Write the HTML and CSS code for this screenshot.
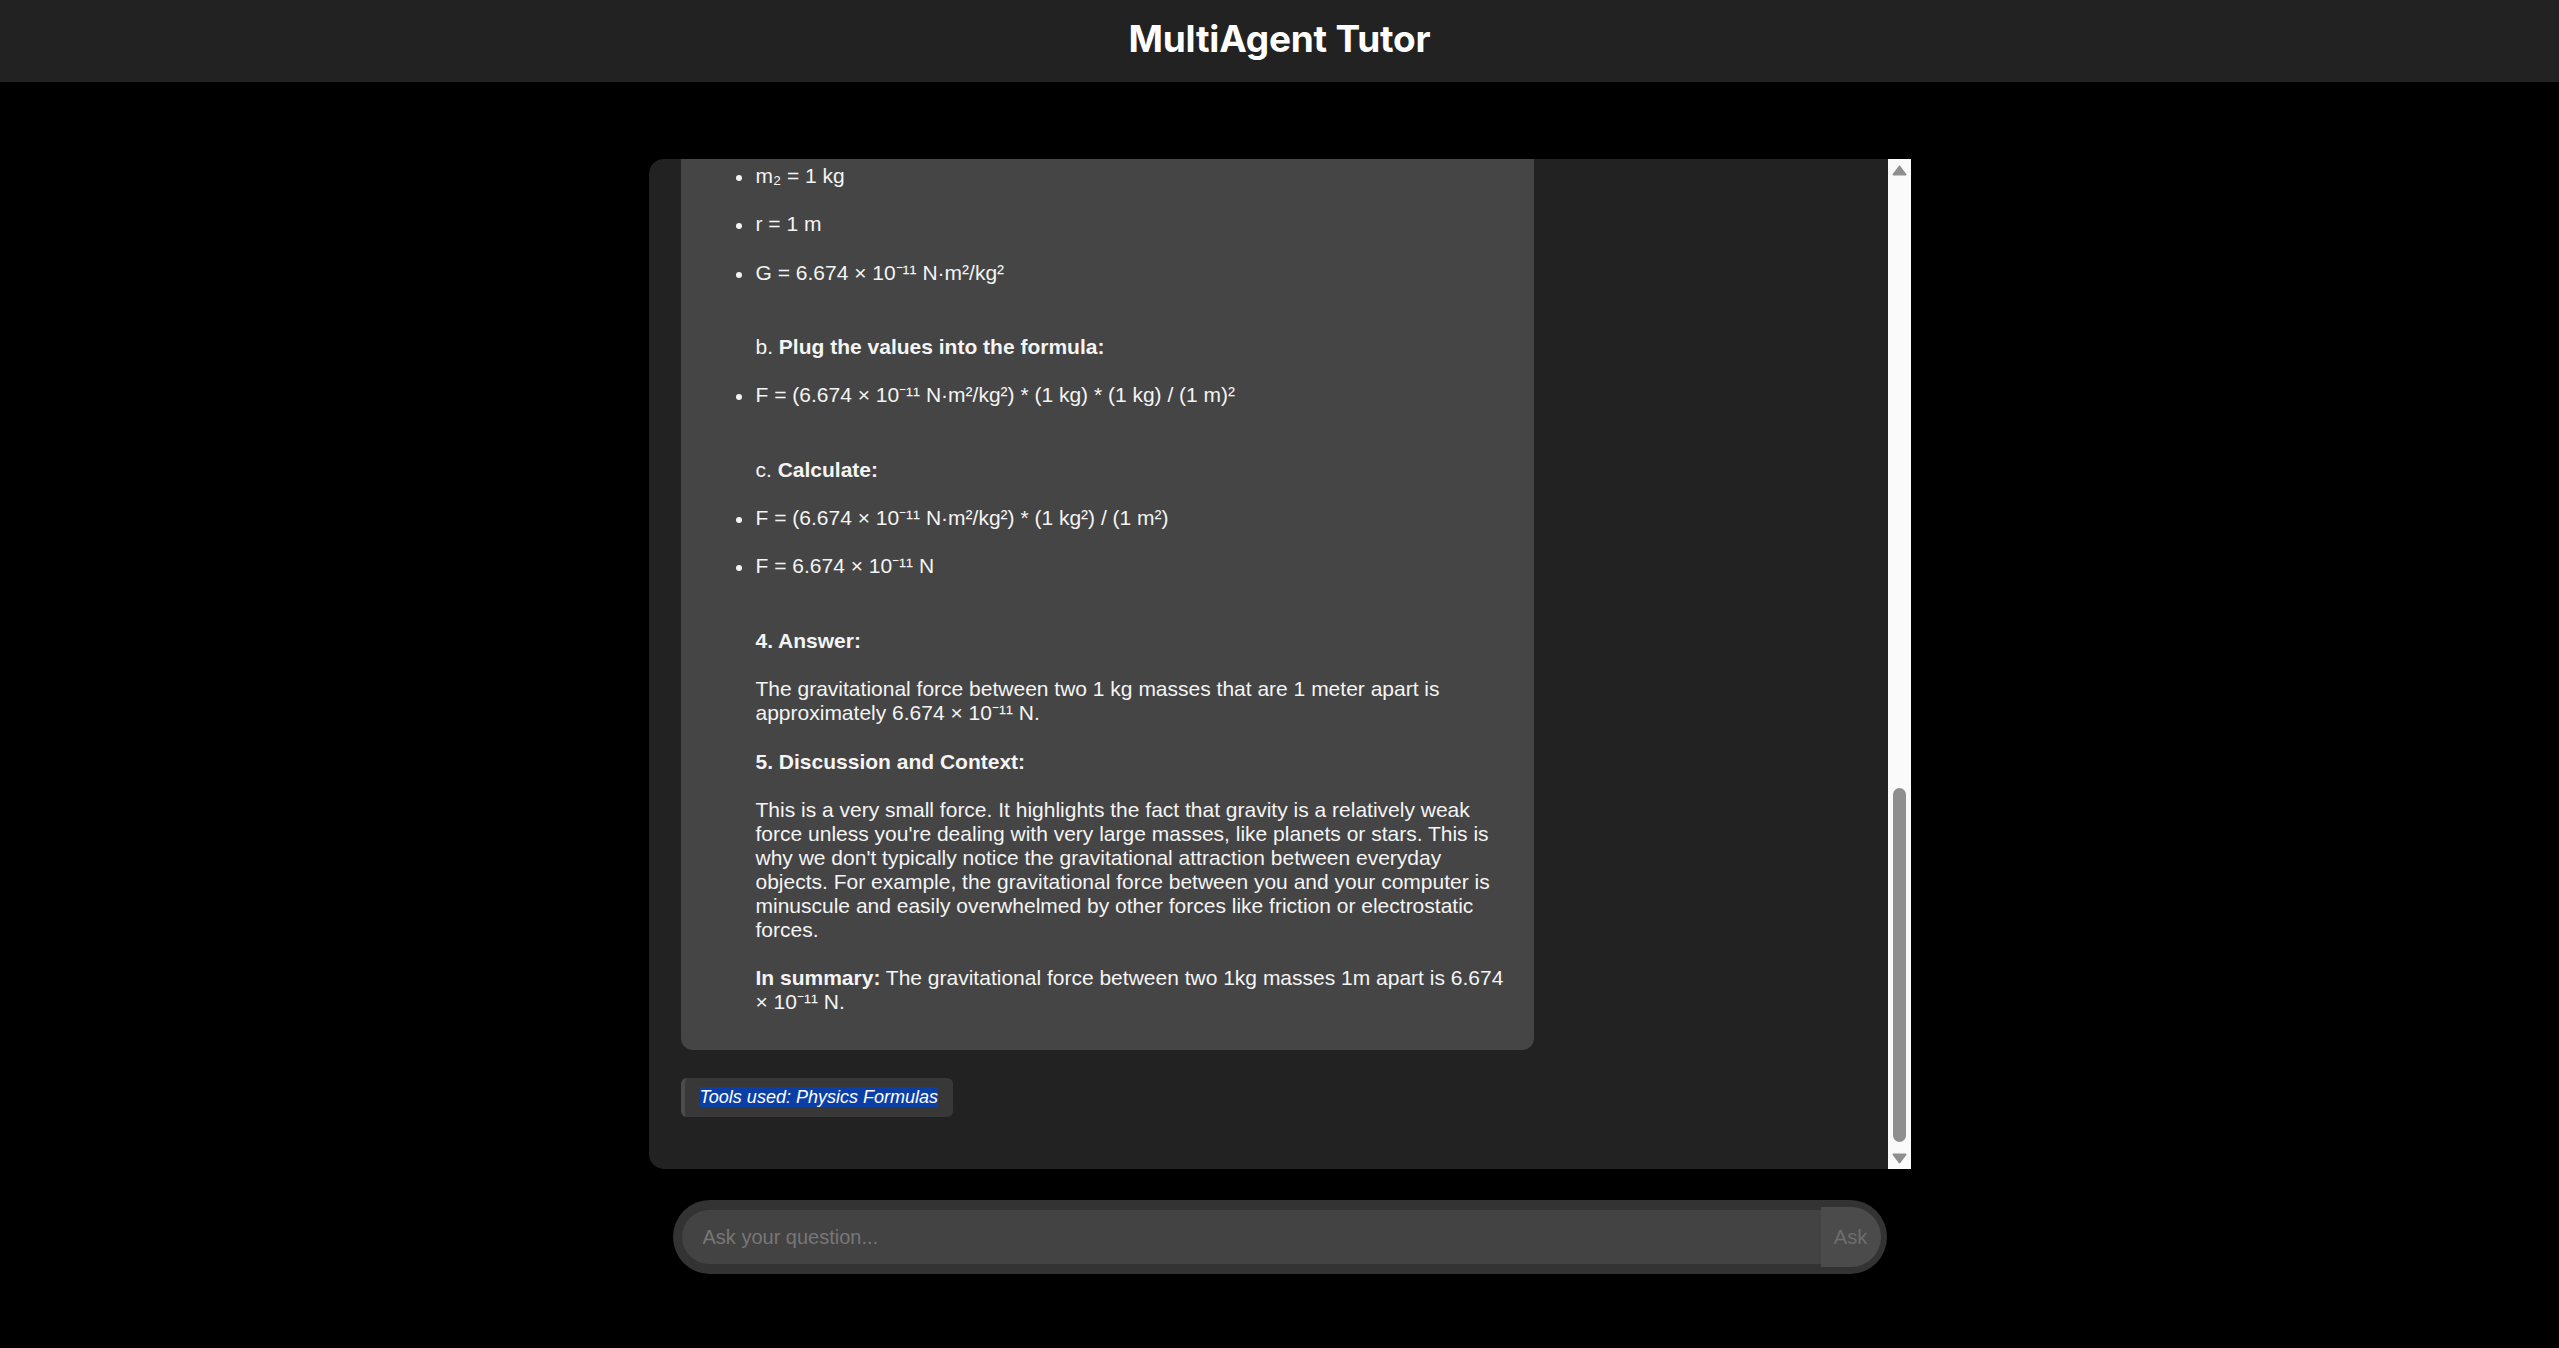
FILE: index.html
```html
<!DOCTYPE html>
<html lang="en">
<head>
<meta charset="utf-8">
<title>MultiAgent Tutor</title>
<link rel="stylesheet" href="styles.css">
</head>
<body>
<header class="topbar">
  <h1 class="title">MultiAgent Tutor</h1>
</header>
<main class="page">
  <section class="chat">
    <div class="messages">
      <div class="bubble">
        <ul class="list">
          <li>m₂ = 1 kg</li>
          <li class="gap">r = 1 m</li>
          <li class="gap">G = 6.674 × 10⁻¹¹ N·m²/kg²</li>
        </ul>
        <p class="line gap2">b. <strong>Plug the values into the formula:</strong></p>
        <ul class="list gap">
          <li>F = (6.674 × 10⁻¹¹ N·m²/kg²) * (1 kg) * (1 kg) / (1 m)²</li>
        </ul>
        <p class="line gap2">c. <strong>Calculate:</strong></p>
        <ul class="list gap">
          <li>F = (6.674 × 10⁻¹¹ N·m²/kg²) * (1 kg²) / (1 m²)</li>
          <li class="gap">F = 6.674 × 10⁻¹¹ N</li>
        </ul>
        <p class="line gap2"><strong>4. Answer:</strong></p>
        <p class="line gap">The gravitational force between two 1 kg masses that are 1 meter apart is approximately 6.674 × 10⁻¹¹ N.</p>
        <p class="line gap"><strong>5. Discussion and Context:</strong></p>
        <p class="line gap">This is a very small force. It highlights the fact that gravity is a relatively weak force unless you're dealing with very large masses, like planets or stars. This is why we don't typically notice the gravitational attraction between everyday objects. For example, the gravitational force between you and your computer is minuscule and easily overwhelmed by other forces like friction or electrostatic forces.</p>
        <p class="line gap"><strong>In summary:</strong> The gravitational force between two 1kg masses 1m apart is 6.674 × 10⁻¹¹ N.</p>
      </div>
      <div class="tools"><span class="tools-text">Tools used: Physics Formulas</span></div>
    </div>
    <div class="scrollbar">
      <div class="sb-btn">
        <svg width="15" height="11" viewBox="0 0 15 11"><polygon points="1.5,9.5 7.5,1.5 13.5,9.5" fill="#8f8f8f" stroke="#8f8f8f" stroke-width="2" stroke-linejoin="round"/></svg>
      </div>
      <div class="sb-track"><div class="sb-thumb"></div></div>
      <div class="sb-btn">
        <svg width="15" height="11" viewBox="0 0 15 11"><polygon points="1.5,1.5 13.5,1.5 7.5,9.5" fill="#8f8f8f" stroke="#8f8f8f" stroke-width="2" stroke-linejoin="round"/></svg>
      </div>
    </div>
  </section>
  <form class="ask">
    <input class="ask-input" type="text" placeholder="Ask your question...">
    <button class="ask-btn" type="button">Ask</button>
  </form>
</main>
</body>
</html>
```
FILE: styles.css
```css
html, body {
  margin: 0;
  padding: 0;
  background: #000;
}

body {
  font-family: "Liberation Sans", Arial, sans-serif;
  height: 1348px;
  overflow: hidden;
}

.topbar {
  height: 82px;
  box-sizing: border-box;
  padding-bottom: 5px;
  background: #222222;
  display: flex;
  align-items: center;
  justify-content: center;
}

.title {
  margin: 0;
  font-family: "Inter", "Open Sans", sans-serif;
  font-weight: 700;
  font-size: 37px;
  color: #ffffff;
  line-height: 1;
  letter-spacing: -0.2px;
}

.page {
  display: flex;
  flex-direction: column;
  align-items: center;
  padding-top: 77px;
}

.chat {
  width: 1262px;
  height: 1010px;
  background: #222222;
  border-radius: 15px 0 0 15px;
  display: flex;
  overflow: hidden;
}

.messages {
  flex: 1;
  min-width: 0;
  padding: 0 30px 0 32px;
  display: flex;
  flex-direction: column;
  align-items: flex-start;
}

.bubble {
  width: 853px;
  box-sizing: border-box;
  background: #454545;
  border-radius: 0 0 12px 12px;
  padding: 5px 20px 36px 75px;
  color: #f4f4f4;
  font-size: 21px;
  line-height: 24px;
}

.list {
  list-style: none;
  margin: 0;
  padding: 0;
}

.list li {
  display: flex;
  align-items: flex-start;
}

.list li::before {
  content: "";
  flex: none;
  width: 6px;
  height: 6px;
  border-radius: 50%;
  background: #f4f4f4;
  margin: 11px 14px 0 -20px;
}

.line {
  margin: 0;
}

.gap {
  margin-top: 24.3px;
}

.gap2 {
  margin-top: 50.5px;
}

.bubble strong {
  font-weight: 700;
}

.tools {
  margin-top: 28px;
  background: #383838;
  border-left: 4px solid #4c4c4c;
  border-radius: 6px;
  padding: 9px 15px;
  line-height: 21px;
}

.tools-text {
  font-style: italic;
  font-size: 18px;
  color: #ffffff;
  background: #0c3fa6;
}

.scrollbar {
  width: 23px;
  flex: none;
  background: #fafafa;
  display: flex;
  flex-direction: column;
}

.sb-btn {
  height: 22px;
  display: flex;
  align-items: center;
  justify-content: center;
}

.sb-track {
  flex: 1;
  display: flex;
  flex-direction: column;
  justify-content: flex-end;
  align-items: center;
  padding-bottom: 5px;
}

.sb-thumb {
  width: 13px;
  height: 354px;
  border-radius: 7px;
  background: #8f8f8f;
}

.ask {
  margin: 31px 0 0;
  width: 1214px;
  height: 74px;
  box-sizing: border-box;
  background: #333333;
  border-radius: 37px;
  display: flex;
  align-items: center;
  padding: 0 6px 0 9px;
}

.ask-input {
  flex: 1;
  height: 54px;
  box-sizing: border-box;
  border: 0;
  background: #434343;
  border-radius: 27px 0 0 27px;
  padding: 0 0 0 21px;
  font-family: "Liberation Sans", Arial, sans-serif;
  font-size: 20px;
  color: #eeeeee;
  outline: none;
}

.ask-input::placeholder {
  color: #777777;
}

.ask-btn {
  width: 60px;
  height: 60px;
  border: 0;
  padding: 0;
  background: #4b4b4b;
  border-radius: 0 30px 30px 0;
  color: #6e6e6e;
  font-family: "Liberation Sans", Arial, sans-serif;
  font-size: 20px;
}
```
